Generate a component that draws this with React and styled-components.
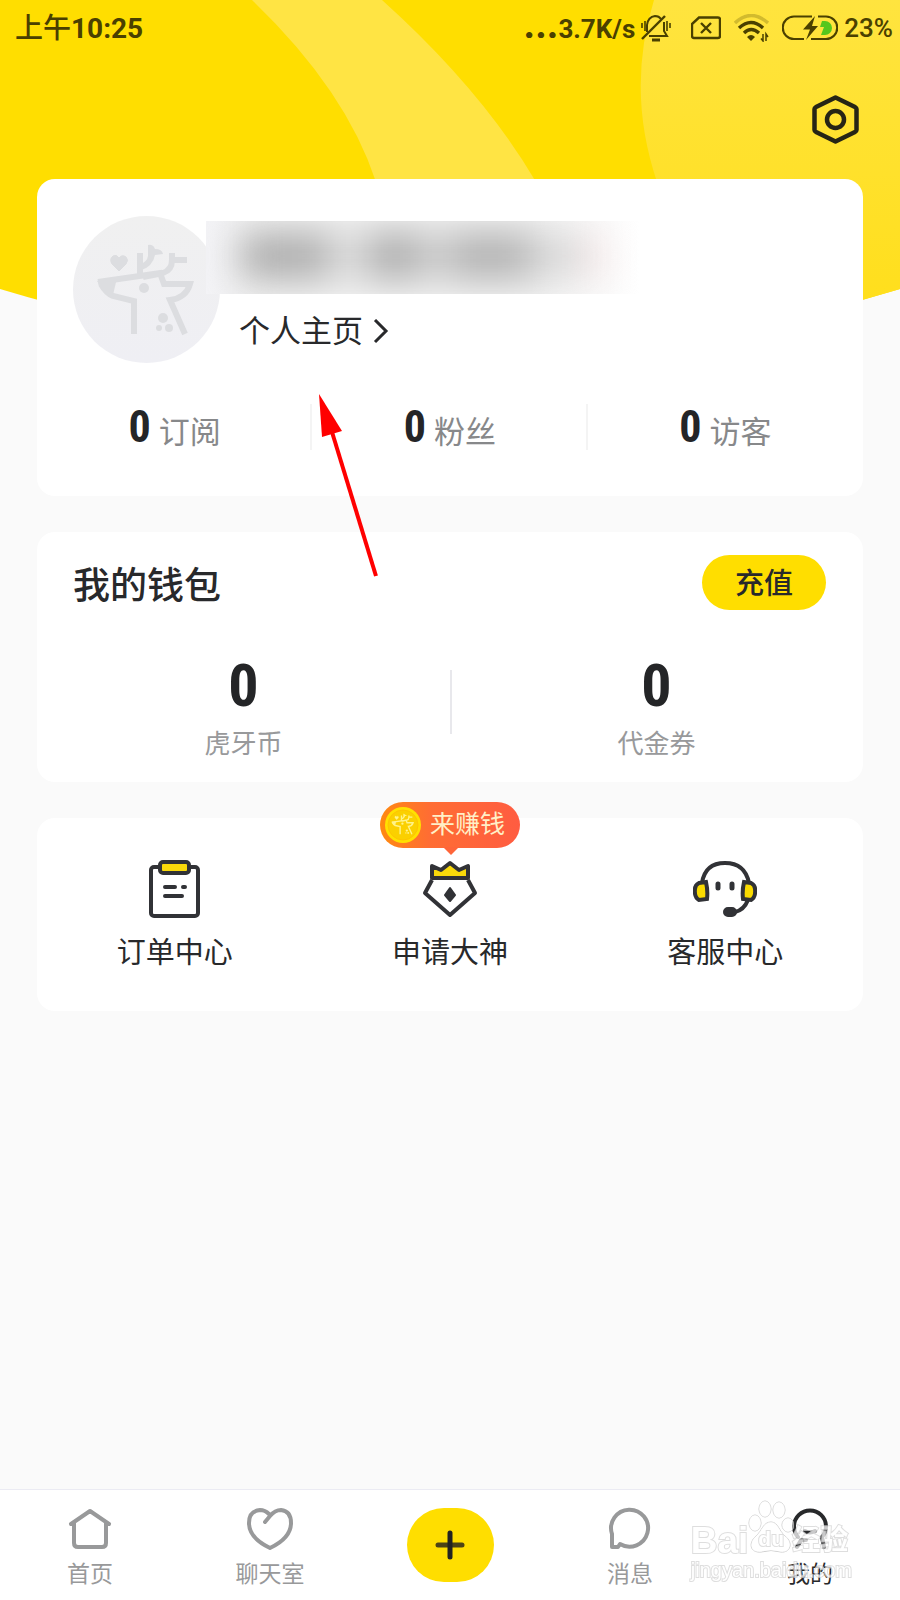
import React from "react";

import styled, { createGlobalStyle } from "styled-components";

const GlobalStyle = createGlobalStyle`
    * {
        box-sizing: border-box;
    }

    body {
        margin: 0;
        background: #fafafa;
        color: #28292b;
        font-family: Roboto, "Noto Sans CJK SC", sans-serif;
    }

    button {
        border: none;
        padding: 0;
        background: none;
        color: inherit;
        font-family: inherit;
        cursor: pointer;
    }

    a {
        color: inherit;
        text-decoration: none;
    }

    svg {
        display: block;
        flex: none;
    }
`;

const Page = styled.div`
    position: relative;
    display: flex;
    flex-direction: column;
    min-height: 100vh;
`;

const Backdrop = styled.svg`
    position: absolute;
    top: 0;
    left: 0;
    z-index: -1;
    width: 100%;
    height: 340px;
`;

const StatusBar = styled.div`
    display: flex;
    align-items: center;
    justify-content: space-between;
    height: 56px;
    padding: 0 7px 0 15px;
    color: #4a4000;
    font-size: 28px;
    font-weight: 500;
    line-height: 32px;
`;

const Clock = styled.span`
    padding-top: 2px;

    b {
        font-weight: 700;
    }
`;

const StatusGroup = styled.div`
    display: flex;
    align-items: center;
`;

const Speed = styled.span`
    margin-right: 6px;
    font-size: 26px;
    font-weight: 700;
`;

const Dots = styled.span`
    font-size: 40px;
    line-height: 28px;
`;

const StatusIcon = styled.span`
    margin-right: ${props => props.$gap}px;
`;

const Percent = styled.span`
    font-size: 26px;
`;

const Toolbar = styled.header`
    display: flex;
    justify-content: flex-end;
    padding: 39px 41px 35px;
`;

const Content = styled.main`
    display: flex;
    flex: 1;
    flex-direction: column;
    gap: 36px;
    padding: 0 37px 36px;
`;

const Card = styled.section`
    border-radius: 18px;
    background: #fff;
`;

const Profile = styled.div`
    display: flex;
    padding: 37px 36px 0;
`;

const Avatar = styled.div`
    flex: none;
    width: 147px;
    height: 147px;
    border-radius: 50%;
    background: linear-gradient(#f0f0f0, #efeff4);
`;

const ProfileText = styled.div`
    position: relative;
    flex: 1;
    padding-top: 94px;
    padding-left: 19px;
`;

const HiddenName = styled.div`
    position: absolute;
    top: 5px;
    left: -14px;
    width: 434px;
    height: 73px;
    overflow: hidden;
    background: linear-gradient(to right, #f3f3f6, #f1f1f1 12%, #f1f1f1 75%, #fff);

    &::before {
        content: "";
        position: absolute;
        top: 12px;
        left: 35px;
        width: 365px;
        height: 46px;
        background: linear-gradient(
            to right,
            #acacac 85px,
            #e0e0e0 95px 120px,
            #acacac 130px 175px,
            #d0d0d0 185px 205px,
            #b0b0b0 215px 280px,
            #dadada 300px 340px,
            #f8eaea 345px
        );
        filter: blur(18px);
    }
`;

const HomeLink = styled.a`
    display: inline-flex;
    align-items: center;
    gap: 10px;
    font-size: 31px;
    line-height: 44px;
`;

const Stats = styled.div`
    display: flex;
    padding: 32px 0 38px;
`;

const Stat = styled.div`
    display: flex;
    flex: 1;
    align-items: center;
    justify-content: center;
    gap: 8px;
    height: 63px;
    padding-top: 5px;
    color: #87888a;
    font-size: 31px;
    background: linear-gradient(#f4f4f4, #f4f4f4) right center / 2px 46px no-repeat;

    &:last-child {
        background: none;
    }

    strong {
        margin-bottom: 5px;
    }
`;

const Num = styled.strong`
    color: #242527;
    font-family: "Liberation Sans Narrow", "Roboto Condensed", Roboto, sans-serif;
    font-size: ${props => props.$size}px;
    font-weight: 700;
    line-height: 1;
`;

const WalletHead = styled.div`
    display: flex;
    align-items: center;
    justify-content: space-between;
    padding: 23px 37px 0 36px;

    h2 {
        margin: 0;
        padding-top: 8px;
        font-size: 37px;
        font-weight: 500;
        line-height: 47px;
    }
`;

const Recharge = styled.button`
    width: 124px;
    height: 55px;
    padding-bottom: 4px;
    border-radius: 28px;
    background: #ffde00;
    font-size: 29px;
    font-weight: 500;
`;

const Balances = styled.div`
    display: flex;
    padding: 46px 0 18px;
`;

const Balance = styled.div`
    display: flex;
    flex: 1;
    flex-direction: column;
    align-items: center;
    gap: 8px;
    color: #98999b;
    font-size: 26px;
    line-height: 40px;

    & + & {
        background: linear-gradient(#e8e8ec, #e8e8ec) left 14px / 2px 64px no-repeat;
    }
`;

const Shortcuts = styled.nav`
    display: flex;
    padding: 42px 0 36px;
`;

const Shortcut = styled.a`
    position: relative;
    display: flex;
    flex: 1;
    flex-direction: column;
    align-items: center;
    gap: 13px;
    font-size: 29px;
    line-height: 44px;
`;

const Badge = styled.span`
    position: absolute;
    top: -58px;
    left: 50%;
    display: flex;
    align-items: center;
    gap: 8px;
    width: 140px;
    height: 46px;
    margin-left: -70px;
    padding-left: 4px;
    border-radius: 23px;
    background: linear-gradient(to right, #ff8a10, #ff6d33 35%, #ff5c41);
    color: #fff0c8;
    font-size: 25px;
    line-height: 48px;

    &::after {
        content: "";
        position: absolute;
        top: 45px;
        left: 63px;
        border: 8px solid transparent;
        border-top-color: #ff6539;
        border-bottom: none;
    }
`;

const TabBar = styled.nav`
    position: relative;
    display: flex;
    height: 111px;
    border-top: 1px solid #ebebf3;
    background: #fff;
`;

const Tab = styled.a`
    display: flex;
    flex: 1;
    flex-direction: column;
    align-items: center;
    gap: 6px;
    padding-top: 16px;
    color: ${props => (props.$active ? "#28292b" : "#98999a")};
    font-size: 23px;
    line-height: 34px;
`;

const AddSlot = styled.div`
    display: flex;
    flex: 1;
    justify-content: center;
    padding-top: 18px;
`;

const AddButton = styled.button`
    display: flex;
    align-items: center;
    justify-content: center;
    width: 87px;
    height: 74px;
    border-radius: 37px;
    background: #ffde00;
`;

const Watermark = styled.div`
    position: absolute;
    top: 12px;
    right: 48px;
    color: #fff;
    font-family: "Liberation Sans", "Noto Sans CJK SC", sans-serif;
    font-size: 20px;
    line-height: 26px;
    opacity: 0.75;
    -webkit-text-stroke: 2px #d4d4d4;
    paint-order: stroke fill;
    pointer-events: none;
`;

const WatermarkLogo = styled.div`
    display: flex;
    align-items: flex-end;
    height: 55px;
    font-size: 37px;
    font-weight: 700;
    line-height: 32px;

    small {
        font-size: 28px;
    }
`;

const Paw = styled.span`
    position: relative;
    width: 44px;
    height: 57px;

    b {
        position: absolute;
        top: 23px;
        left: 10px;
        font-size: 21px;
    }
`;

const Pointer = styled.svg`
    position: absolute;
    top: 390px;
    left: 311px;
    pointer-events: none;
`;

const HeaderBackdrop = () => (
    <Backdrop viewBox="0 0 900 340" preserveAspectRatio="none" aria-hidden="true">
        <defs>
            <linearGradient id="fade" x1="0" y1="0" x2="0" y2="1">
                <stop offset="0" stopColor="#ffe43f" />
                <stop offset="1" stopColor="#ffde18" />
            </linearGradient>
            <clipPath id="curve">
                <path d="M0 0H900V289Q450 425 0 289Z" />
            </clipPath>
        </defs>
        <g clipPath="url(#curve)">
            <path d="M0 0H900V340H0Z" fill="#ffde00" />
            <path d="M252 0Q346 90 376 182H536Q482 90 382 0Z" fill="#ffe444" />
            <path d="M654 0Q626 90 657 182L700 340H900V0Z" fill="url(#fade)" />
        </g>
    </Backdrop>
);

const BellOff = () => (
    <svg width="30" height="28" viewBox="0 0 30 28" fill="none" stroke="currentColor" strokeWidth="2">
        <path d="M1 25L24 2" strokeWidth="2.4" />
        <path d="M6 18V11Q7 3 14 2Q18 2 20 5M23 8V17L26 22H8" />
        <path d="M11 26H19" strokeWidth="3" />
        <path d="M1 9V14M4 7V17M26 7V17M29 9V14" strokeWidth="1.6" />
    </svg>
);

const NoSim = () => (
    <svg width="30" height="24" viewBox="0 0 30 24" fill="none" stroke="currentColor" strokeWidth="2.4">
        <path d="M8 1.5H27Q29 1.5 29 3.5V20Q29 22 27 22H3Q1 22 1 20V8Z" />
        <path d="M10 7L20 17M20 7L10 17" />
    </svg>
);

const Wifi = () => (
    <svg width="35" height="28" viewBox="0 0 35 28" fill="none" stroke="currentColor" strokeWidth="3.4">
        <path d="M1 9Q17 -6 34 9" opacity=".25" />
        <path d="M5 14Q17 3 29 14M10 19Q17 12 25 19" />
        <path d="M13 23Q17 19 21 23L17 27Z" fill="currentColor" stroke="none" />
        <path d="M29 20V27L27 24.500M32 27V20L34 23" strokeWidth="1.500" />
    </svg>
);

const Battery = () => (
    <svg width="56" height="26" viewBox="0 0 56 26" fill="none" stroke="currentColor" strokeWidth="2.2">
        <path d="M30 1.500H12A11 11 0 0 0 12 24H22M36 1.500H44A11 11 0 0 1 44 24H29" />
        <path d="M40 6H43A7 7 0 0 1 43 20H39L42 12H38Z" fill="#56c71c" stroke="none" />
        <path d="M33 1L21 14.500H28L24 25L36 11H30Z" fill="currentColor" stroke="none" />
    </svg>
);

const SettingsIcon = () => (
    <svg width="47" height="49" viewBox="0 0 47 49" fill="none" stroke="#262515" strokeWidth="4.500" strokeLinejoin="round">
        <path d="M23.500 2.500L43 12Q44.500 13 44.500 14V35Q44.500 36 43 37L23.500 46.500L4 37Q2.500 36 2.500 35V14Q2.500 13 4 12Z" />
        <circle cx="23.500" cy="24.500" r="8.500" />
    </svg>
);

const Deer = ({ size, color, ...rest }) => (
    <svg width={size} height={size} viewBox="0 0 147 147" fill="none" stroke={color} strokeWidth="6" {...rest}>
        <path d="M46 55L39 48Q36 43 40 40Q44 38 46 42Q49 38 53 41Q56 44 53 48Z" fill={color} stroke={color} strokeWidth="1" />
        <path d="M67 62V37M68 51Q77 48 78 40M70 61L90 57Q99 54 99 44V37M97 44H114" />
        <path d="M75 29Q80 28 82 33Q89 33 90 38L82 39L80 45L75 40Z" fill={color} stroke="none" />
        <path d="M25 66L87 57L91 68H117Q113 82 97 84L112 118" />
        <path d="M61 118V85L40 80Q33 77 28 68" />
        <path d="M24 65L44 62L40 79Q32 78 24 65Z" fill={color} stroke="none" />
        <circle cx="71" cy="72" r="5" fill={color} stroke="none" />
        <circle cx="90" cy="102" r="5" fill={color} stroke="none" />
        <circle cx="96" cy="112" r="4" fill={color} stroke="none" />
        <circle cx="86" cy="112" r="3" fill={color} stroke="none" />
    </svg>
);

const Coin = () => (
    <svg width="38" height="38" viewBox="0 0 38 38">
        <circle cx="19" cy="19" r="18" fill="#ffe100" />
        <circle cx="19" cy="19" r="15" fill="#fbd000" stroke="#ffc400" />
        <Deer size={34} color="#fff38a" x="2" y="1" />
    </svg>
);

const OrderIcon = () => (
    <svg width="58" height="58" viewBox="0 0 58 58" fill="none" stroke="#313236" strokeWidth="4" strokeLinecap="round">
        <rect x="5" y="7" width="47" height="49" rx="3" />
        <rect x="14" y="2" width="29" height="11" rx="3" fill="#f9d90a" />
        <path d="M19 27H29M37 27H39M19 36H36" />
    </svg>
);

const MasterIcon = () => (
    <svg width="58" height="58" viewBox="0 0 58 58" fill="none" stroke="#313236" strokeWidth="4" strokeLinejoin="round">
        <path d="M11 20L4 33L29 55L54 33L47 20" />
        <path d="M11 18V6L20 10L29 3L38 10L47 6V18Z" fill="#f9d90a" />
        <path d="M29 28L34 35L29 41L24 35Z" fill="#313236" strokeWidth="2" />
    </svg>
);

const SupportIcon = () => (
    <svg width="64" height="58" viewBox="0 0 64 58" fill="none" stroke="#313236" strokeWidth="4" strokeLinecap="round">
        <path d="M9 23Q12 3 32 3T56 23M55 40Q51 50 42 52" />
        <path d="M6 23L13 22Q15 31 14 39L6 40Q1 37 2 29Q2 25 6 23ZM58 23L51 22Q49 31 50 39L58 40Q63 37 62 29Q62 25 58 23Z" fill="#fadb00" />
        <path d="M25 24V28M39 24V28" strokeWidth="5" />
        <rect x="32" y="49" width="10" height="6" rx="3" fill="#313236" />
    </svg>
);

const TabIcon = ({ children }) => (
    <svg width="46" height="46" viewBox="0 0 46 46" fill="none" stroke="currentColor" strokeWidth="4" strokeLinecap="round" strokeLinejoin="round">
        {children}
    </svg>
);

const stats = ["订阅", "粉丝", "访客"];

const balances = ["虎牙币", "代金券"];

export default () => (
    <Page>
        <GlobalStyle />
        <HeaderBackdrop />
        <StatusBar>
            <Clock>
                上午<b>10:25</b>
            </Clock>
            <StatusGroup>
                <Speed>
                    <Dots>...</Dots>3.7K/s
                </Speed>
                <StatusIcon $gap={20}><BellOff /></StatusIcon>
                <StatusIcon $gap={13}><NoSim /></StatusIcon>
                <StatusIcon $gap={13}><Wifi /></StatusIcon>
                <StatusIcon $gap={6}><Battery /></StatusIcon>
                <Percent>23%</Percent>
            </StatusGroup>
        </StatusBar>
        <Toolbar>
            <button aria-label="设置">
                <SettingsIcon />
            </button>
        </Toolbar>
        <Content>
            <Card>
                <Profile>
                    <Avatar>
                        <Deer size={147} color="#dcdde0" />
                    </Avatar>
                    <ProfileText>
                        <HiddenName />
                        <HomeLink href="#home">
                            个人主页
                            <svg width="16" height="26" viewBox="0 0 16 26" fill="none" stroke="currentColor" strokeWidth="3">
                                <path d="M2 1L13 12L2 23" />
                            </svg>
                        </HomeLink>
                    </ProfileText>
                </Profile>
                <Stats>
                    {stats.map(label => (
                        <Stat key={label}>
                            <Num $size={44}>0</Num>
                            {label}
                        </Stat>
                    ))}
                </Stats>
            </Card>
            <Card>
                <WalletHead>
                    <h2>我的钱包</h2>
                    <Recharge>充值</Recharge>
                </WalletHead>
                <Balances>
                    {balances.map(label => (
                        <Balance key={label}>
                            <Num $size={60}>0</Num>
                            {label}
                        </Balance>
                    ))}
                </Balances>
            </Card>
            <Card>
                <Shortcuts>
                    <Shortcut href="#orders">
                        <OrderIcon />
                        订单中心
                    </Shortcut>
                    <Shortcut href="#master">
                        <Badge>
                            <Coin />
                            来赚钱
                        </Badge>
                        <MasterIcon />
                        申请大神
                    </Shortcut>
                    <Shortcut href="#support">
                        <SupportIcon />
                        客服中心
                    </Shortcut>
                </Shortcuts>
            </Card>
        </Content>
        <TabBar>
            <Tab href="#index">
                <TabIcon>
                    <path d="M4 18L23 5L42 18M7 17V37Q7 41 11 41H35Q39 41 39 37V17" />
                </TabIcon>
                首页
            </Tab>
            <Tab href="#chat">
                <TabIcon>
                    <path d="M18 16L23 10Q28 4 34 4Q44 5 44 17Q44 32 23 42Q2 32 2 17Q2 5 13 4Q18 4 22 8" />
                </TabIcon>
                聊天室
            </Tab>
            <AddSlot>
                <AddButton aria-label="发布">
                    <svg width="30" height="30" viewBox="0 0 30 30" strokeWidth="5" strokeLinecap="round">
                        <path d="M3 15H27" stroke="#4d4415" />
                        <path d="M15 3V27" stroke="#222" />
                    </svg>
                </AddButton>
            </AddSlot>
            <Tab href="#message">
                <TabIcon>
                    <path d="M5 41V28A18.500 18.500 0 1 1 13 38L11 41Z" />
                </TabIcon>
                消息
            </Tab>
            <Tab href="#mine" $active>
                <TabIcon>
                    <path d="M11 31A16 16 0 1 1 35 31L37 41M18 25Q23 28 28 25M10 41L14 34H19" />
                </TabIcon>
                我的
            </Tab>
            <Watermark>
                <WatermarkLogo>
                    Bai
                    <Paw>
                        <svg width="46" height="54" viewBox="0 0 46 54" fill="#ffffffaa" stroke="#b8b8b8">
                            <ellipse cx="7" cy="23" rx="6" ry="8" />
                            <ellipse cx="17" cy="9" rx="6" ry="8" />
                            <ellipse cx="31" cy="10" rx="6" ry="8" />
                            <ellipse cx="40" cy="25" rx="6" ry="7" />
                            <path d="M23 22C30 22 31 31 37 36C46 43 42 53 33 52Q23 49 13 52C2 53 0 43 8 36C14 31 15 22 23 22Z" />
                        </svg>
                        <b>du</b>
                    </Paw>
                    <small>经验</small>
                </WatermarkLogo>
                jingyan.baidu.com
            </Watermark>
        </TabBar>
        <Pointer width="70" height="190" viewBox="0 0 70 190">
            <path d="M21 42L65 186" stroke="#f00" strokeWidth="4" />
            <path d="M8 4L31 41L11 47Z" fill="#f00" />
        </Pointer>
    </Page>
);
